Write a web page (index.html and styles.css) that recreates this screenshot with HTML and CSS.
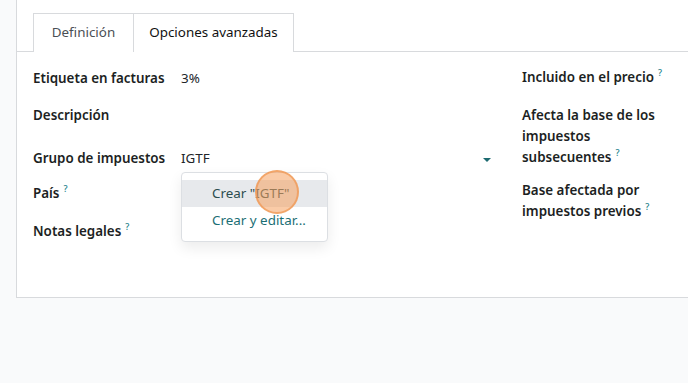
FILE: index.html
```html
<!DOCTYPE html>
<html lang="es">
<head>
<meta charset="utf-8">
<link rel="stylesheet" href="styles.css">
</head>
<body>
<div class="sheet">
  <div class="tabs">
    <div class="tab">Definición</div>
    <div class="tab active">Opciones avanzadas</div>
  </div>
  <div class="form">
    <div class="col left">
      <div class="row"><div class="label">Etiqueta en facturas</div><div class="value">3%</div></div>
      <div class="row"><div class="label">Descripción</div><div class="value"></div></div>
      <div class="row">
        <div class="label">Grupo de impuestos</div>
        <div class="value field">
          <span>IGTF</span>
          <span class="caret"></span>
          <div class="dropdown">
            <div class="item hl">Crear "IGTF"</div>
            <div class="item">Crear y editar...</div>
            <div class="click"></div>
          </div>
        </div>
      </div>
      <div class="row"><div class="label">País<sup class="q">?</sup></div><div class="value"></div></div>
      <div class="row"><div class="label">Notas legales<sup class="q">?</sup></div><div class="value"></div></div>
    </div>
    <div class="col right">
      <div class="rrow"><div class="label">Incluido en el precio<sup class="q">?</sup></div></div>
      <div class="rrow"><div class="label">Afecta la base de los<br>impuestos<br>subsecuentes<sup class="q">?</sup></div></div>
      <div class="rrow"><div class="label">Base afectada por<br>impuestos previos<sup class="q">?</sup></div></div>
    </div>
  </div>
</div>
</body>
</html>
```
FILE: styles.css
```css
html, body {
  margin: 0;
  padding: 0;
  background: #f9fafb;
  font-family: "Noto Sans", "Open Sans", sans-serif;
  font-size: 13.4px;
  color: #212529;
}
.sheet {
  margin-left: 16px;
  height: 297px;
  background: #fff;
  border-left: 1px solid #d8dadd;
  border-bottom: 1px solid #d8dadd;
  position: relative;
}
.tabs {
  display: flex;
  padding: 13px 0 0 16px;
  border-bottom: 1px solid #d8dadd;
  height: 38px;
}
.tab {
  box-sizing: border-box;
  height: 39px;
  line-height: 37px;
  border: 1px solid #d8dadd;
  border-bottom: none;
  color: #4a4f55;
  background: #fff;
}
.tab:first-child {
  width: 100px;
  text-align: center;
  border-right: none;
}
.tab.active {
  color: #111;
  width: 161px;
  text-align: center;
}
.form {
  display: flex;
  padding-left: 16px;
}
.col.left {
  width: 473px;
  display: grid;
  grid-template-rows: 37px 43px 35px 38px 21px;
  padding-top: 16px;
}
.col.right {
  margin-left: 16px;
  padding-top: 15px;
  display: grid;
  grid-template-rows: 38px 75px 42px;
}
.row {
  display: flex;
  line-height: 21px;
}
.label {
  font-weight: 600;
  line-height: 21px;
  color: #1c1f23;
}
.row .label { width: 148px; flex: none; }
.value { flex: 1; position: relative; }
.field { display: flex; align-items: center; height: 21px; }
.caret {
  position: absolute;
  right: 15px;
  top: 10px;
  width: 0; height: 0;
  border-left: 4px solid transparent;
  border-right: 4px solid transparent;
  border-top: 4px solid #1c6a70;
}
.q {
  color: #1c7f8a;
  font-size: 9px;
  font-weight: 500;
  margin-left: 4px;
  vertical-align: top;
  position: relative;
  top: -5px;
}
.dropdown {
  position: absolute;
  left: 0;
  top: 24px;
  width: 147px;
  box-sizing: border-box;
  padding: 7px 0;
  background: #fff;
  border: 1px solid #dcdfe3;
  border-radius: 4px;
  box-shadow: 0 6px 14px rgba(0,0,0,0.08);
  z-index: 5;
}
.item {
  height: 27px;
  line-height: 27px;
  padding-left: 30px;
  color: #1b6e74;
  white-space: nowrap;
}
.item.hl { background: #e7e9ec; color: #2b4d4f; }
.click {
  position: absolute;
  left: 73px;
  top: -3px;
  width: 40px;
  height: 40px;
  border-radius: 50%;
  background: rgba(245, 160, 95, 0.55);
  border: 2px solid rgba(240, 150, 80, 0.7);
}
```
